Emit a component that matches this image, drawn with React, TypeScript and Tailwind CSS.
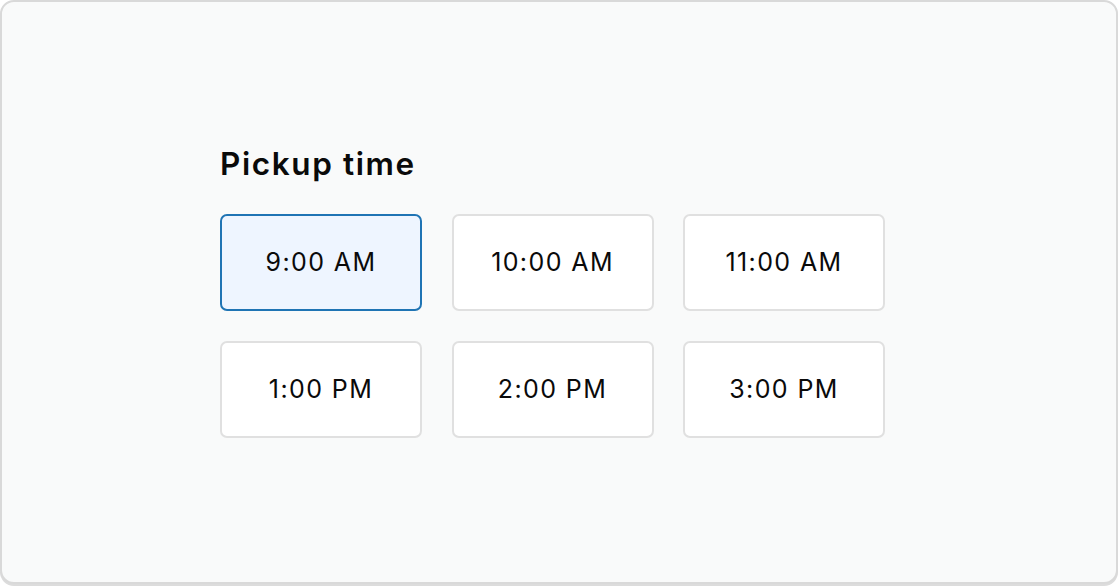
const times = ['9:00 AM', '10:00 AM', '11:00 AM', '1:00 PM', '2:00 PM', '3:00 PM'];

export default function App() {
  const selected = '9:00 AM';

  return (
    <div className="w-[1118px] h-[588px] bg-white" style={{ fontFamily: 'Inter, "Noto Sans", sans-serif' }}>
      <div className="w-full h-[584px] rounded-[14px] border-2 border-[#d9d9d9] bg-[#f9fafa] flex items-center justify-center shadow-[0_2px_0_#dcdcdc]">
        <div className="flex flex-col -ml-[13px] mt-[2px]">
          <h2 className="text-[31.5px] font-semibold text-[#0a0a0a] leading-none tracking-[1.6px]">Pickup time</h2>
          <div className="grid grid-cols-[202px_202px_202px] gap-x-[29.5px] gap-y-[30px] mt-[35px]">
            {times.map((t) => (
              <button
                key={t}
                className={
                  t === selected
                    ? 'h-[97px] rounded-[7px] border-2 border-[#1f74b4] bg-[#eef5ff] text-[25px] tracking-[1.4px] text-[#0a0a0a]'
                    : 'h-[97px] rounded-[7px] border-2 border-[#e0e0e0] bg-white text-[25px] tracking-[1.4px] text-[#0a0a0a]'
                }
              >
                {t}
              </button>
            ))}
          </div>
        </div>
      </div>
    </div>
  );
}
